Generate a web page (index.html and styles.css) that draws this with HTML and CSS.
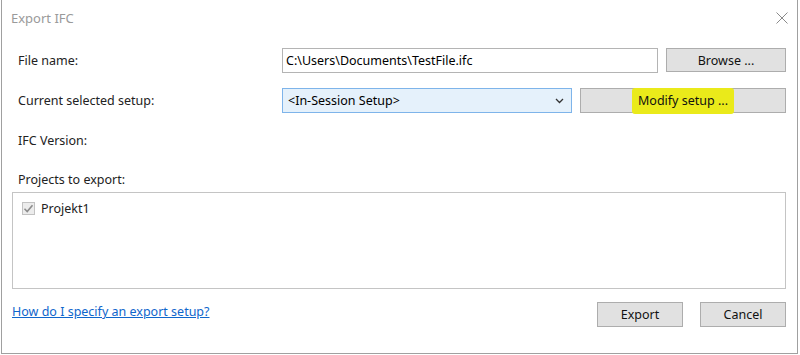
FILE: index.html
```html
<!DOCTYPE html>
<html lang="en">

<head>
    <link rel="stylesheet" href="styles.css">
</head>

<body>
    <div class="dialog">
        <div class="titlebar">
            <span class="title">Export IFC</span>
            <svg class="close" width="12" height="12" viewBox="0 0 12 12">
                <path d="M0.5 0.5 L11.5 11.5 M11.5 0.5 L0.5 11.5" stroke="#8a8a8a" stroke-width="1" fill="none" />
            </svg>
        </div>

        <div class="content">
            <div class="row">
                <label class="label" for="file">File name:</label>
                <div class="fields">
                    <input type="text" id="file" class="textbox" value="C:\Users\Documents\TestFile.ifc">
                    <button class="button browse">Browse ...</button>
                </div>
            </div>

            <div class="row second">
                <label class="label">Current selected setup:</label>
                <div class="fields">
                    <div class="dropdown">
                        <span>&lt;In-Session Setup&gt;</span>
                        <svg width="9" height="6" viewBox="0 0 9 6">
                            <path d="M1 1 L4.5 4.5 L8 1" stroke="#333" stroke-width="1.3" fill="none" />
                        </svg>
                    </div>
                    <button class="button modify"><span class="marker">Modify setup ...</span></button>
                </div>
            </div>

            <div class="label version">IFC Version:</div>
            <div class="label projects">Projects to export:</div>

            <div class="listbox">
                <div class="item">
                    <span class="check">
                        <svg width="13" height="13" viewBox="0 0 13 13">
                            <path d="M2.5 6.8 L5.2 9.5 L10.5 3.2" stroke="#8c8c8c" stroke-width="1.6" fill="none" />
                        </svg>
                    </span>
                    <span>Projekt1</span>
                </div>
            </div>

            <div class="footer">
                <a class="link" href="#">How do I specify an export setup?</a>
                <div class="actions">
                    <button class="button action">Export</button>
                    <button class="button action">Cancel</button>
                </div>
            </div>
        </div>
    </div>
</body>

</html>
```

FILE: styles.css
```css
body {
    font-family: "Noto Sans", "Open Sans", sans-serif;
    font-size: 12.5px;
    color: #222222;
    background-color: #ffffff;
    margin: 0;
    padding: 0;
}

.dialog {
    width: 797px;
    height: 354px;
    margin-left: 1px;
    box-sizing: border-box;
    border: 1px solid #a0a0a0;
    border-top: none;
    background-color: #ffffff;
}

.titlebar {
    height: 36px;
    display: flex;
    align-items: center;
    justify-content: space-between;
    padding: 0 9px 0 9px;
    box-sizing: border-box;
}

.title {
    color: #9a9a9a;
    font-size: 13px;
}

.content {
    padding: 12px 11px 0 10px;
}

.row {
    display: grid;
    grid-template-columns: 270px 1fr;
    align-items: center;
    height: 25px;
}

.row.second {
    margin-top: 15px;
}

.label {
    padding-left: 6px;
}

.fields {
    display: flex;
    gap: 8px;
    height: 25px;
}

.textbox {
    width: 376px;
    box-sizing: border-box;
    border: 1px solid #b4b4b4;
    padding: 0 3px;
    font-family: inherit;
    font-size: 12.5px;
    color: #000;
    outline: none;
}

.button {
    font-family: inherit;
    font-size: 12.5px;
    color: #111;
    background-color: #e1e1e1;
    border: 1px solid #adadad;
    padding: 0;
    box-sizing: border-box;
}

.browse {
    flex: 1;
    height: 24px;
}

.dropdown {
    width: 290px;
    box-sizing: border-box;
    border: 1px solid #7eb4ea;
    background-color: #e5f1fb;
    display: flex;
    align-items: center;
    justify-content: space-between;
    padding: 0 7px 0 5px;
    color: #000;
}

.modify {
    flex: 1;
}

.marker {
    background-color: #eaea1a;
    padding: 4px 6px 5px 6px;
    border-radius: 3px;
}

.version {
    margin-top: 20px;
    line-height: 16px;
}

.projects {
    margin-top: 23px;
    line-height: 16px;
}

.listbox {
    margin-top: 4px;
    height: 97px;
    box-sizing: border-box;
    border: 1px solid #c4c4c4;
    padding: 7px 9px;
}

.item {
    display: flex;
    align-items: center;
    gap: 6px;
}

.check {
    width: 13px;
    height: 13px;
    box-sizing: border-box;
    border: 1px solid #c2c2c2;
    background-color: #ececec;
    display: flex;
}

.check svg {
    margin: -1px;
}

.footer {
    display: flex;
    justify-content: space-between;
    align-items: flex-start;
    margin-top: 13px;
}

.link {
    color: #0f66cc;
    text-decoration: underline;
    padding-top: 1px;
}

.actions {
    display: flex;
    gap: 17px;
}

.action {
    width: 86px;
    height: 25px;
}
```
